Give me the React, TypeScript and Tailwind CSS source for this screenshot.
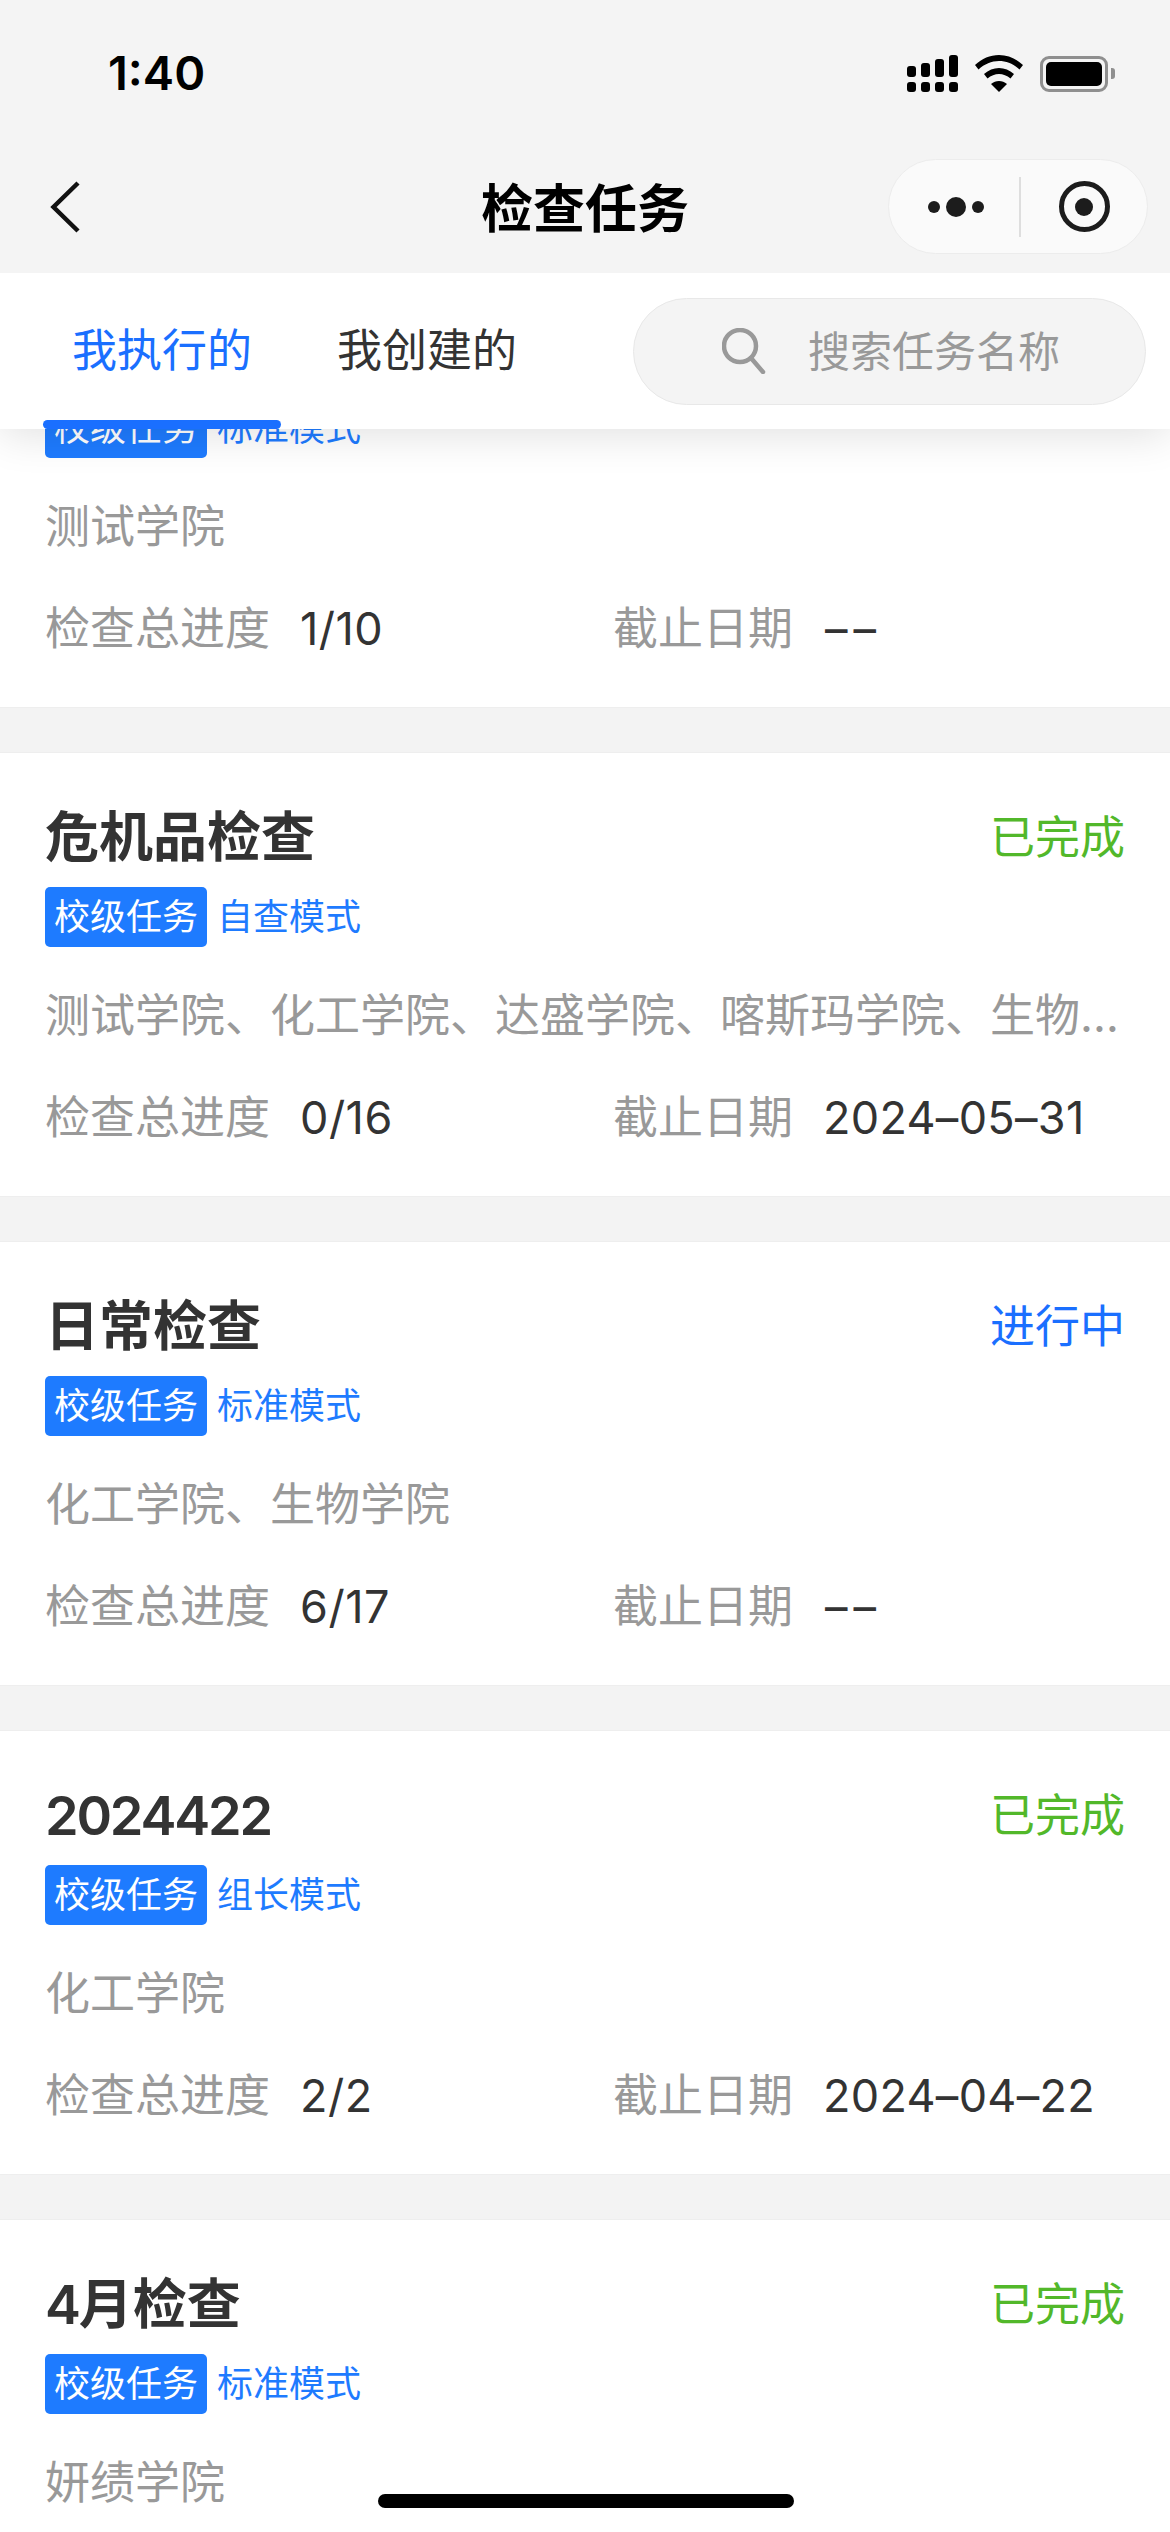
import React from "react";

interface Task {
  name: string;
  mode: string;
  status?: "done" | "doing";
  colleges: string;
  progress?: string;
  deadline?: string;
}

const NO_DEADLINE = "––";

const TASKS: Task[] = [
  { name: "", mode: "标准模式", colleges: "测试学院", progress: "1/10", deadline: NO_DEADLINE },
  {
    name: "危机品检查",
    mode: "自查模式",
    status: "done",
    colleges: "测试学院、化工学院、达盛学院、喀斯玛学院、生物学院、妍绩学院",
    progress: "0/16",
    deadline: "2024–05–31",
  },
  { name: "日常检查", mode: "标准模式", status: "doing", colleges: "化工学院、生物学院", progress: "6/17", deadline: NO_DEADLINE },
  { name: "2024422", mode: "组长模式", status: "done", colleges: "化工学院", progress: "2/2", deadline: "2024–04–22" },
  { name: "4月检查", mode: "标准模式", status: "done", colleges: "妍绩学院" },
];

const StatusIcons = () => (
  <div className="flex items-center gap-[17px]">
    <svg width="51" height="37" viewBox="0 0 51 37" fill="#000">
      <rect x="0" y="11" width="9" height="11" rx="3" />
      <rect x="14" y="8" width="9" height="14" rx="3" />
      <rect x="28" y="4" width="9" height="18" rx="3" />
      <rect x="42" y="0" width="9" height="22" rx="3" />
      <rect x="0" y="27" width="9" height="10" rx="3" />
      <rect x="14" y="27" width="9" height="10" rx="3" />
      <rect x="28" y="27" width="9" height="10" rx="3" />
      <rect x="42" y="27" width="9" height="10" rx="3" />
    </svg>
    <svg width="48" height="37" viewBox="0 0 48 37" fill="#000">
      <path d="M24 0c9 0 17 3.500 24 10l-3.500 4.500C38.500 9 31.500 6 24 6S9.500 9 3.500 14.500L0 10C7 3.500 15 0 24 0z" />
      <path d="M24 13c5.500 0 10.500 2 15 6l-3.500 4.500C32 20.500 28 19 24 19s-8 1.500-11.500 4.500L9 19c4.500-4 9.500-6 15-6z" />
      <path d="M24 26c3 0 5.500 1 8 3l-8 8-8-8c2.500-2 5-3 8-3z" />
    </svg>
    <div className="flex items-center">
      <div className="h-[36px] w-[68px] rounded-[9px] border-[3px] border-[#8f8f8f] p-[3px]">
        <div className="h-full w-full rounded-[5px] bg-black" />
      </div>
      <div className="ml-[3px] h-[11px] w-[4px] rounded-r-[3px] bg-[#8f8f8f]" />
    </div>
  </div>
);

const CapsuleMenu = () => (
  <div className="flex h-[95px] w-[260px] items-center rounded-full border border-[#ececec] bg-[#fafafa]">
    <div className="flex w-[130px] items-center justify-center gap-[6px] pl-[3px]">
      <span className="h-[12px] w-[12px] rounded-full bg-[#1c1c1c]" />
      <span className="h-[20px] w-[20px] rounded-full bg-[#1c1c1c]" />
      <span className="h-[12px] w-[12px] rounded-full bg-[#1c1c1c]" />
    </div>
    <div className="h-[60px] w-[2px] bg-[#dedede]" />
    <div className="flex flex-1 items-center justify-center">
      <div className="flex h-[51px] w-[51px] items-center justify-center rounded-full border-[5px] border-[#1c1c1c]">
        <span className="h-[18px] w-[18px] rounded-full bg-[#1c1c1c]" />
      </div>
    </div>
  </div>
);

// digits run narrower than the CJK glyphs in the bold title
const TaskName = ({ name }: { name: string }) => (
  <>
    {name.split(/(\d+)/).map((part, i) =>
      /\d/.test(part) ? (
        <span key={i} className="tracking-[-2.200px]">
          {part}
        </span>
      ) : (
        part
      ),
    )}
  </>
);

const TaskCard = ({ task }: { task: Task }) => (
  <div className="h-[445px] border-y border-[#eeeeee] bg-white pt-[50px] pr-[45px] pl-[45px]">
    <div className="flex h-[70px] items-center justify-between">
      <div className="text-[54px] leading-[70px] font-semibold text-[#333333]">
        <TaskName name={task.name} />
      </div>
      {task.status === "done" && <div className="text-[45px] leading-[70px] text-[#52b82a]">已完成</div>}
      {task.status === "doing" && <div className="text-[45px] leading-[70px] text-[#1a6fff]">进行中</div>}
    </div>
    <div className="mt-[14px] flex items-center">
      <span className="flex h-[60px] w-[162px] items-center justify-center rounded-[5px] bg-[#1e7bff] text-[36px] text-white">
        校级任务
      </span>
      <span className="ml-[10px] text-[36px] text-[#1e7bff]">{task.mode}</span>
    </div>
    <div className="mt-[38px] truncate text-[45px] leading-[62px] text-[#999999]">{task.colleges}</div>
    {task.progress && (
      <div className="mt-[40px] flex items-center text-[45px] leading-[62px]">
        <div className="flex w-[568px]">
          <span className="text-[#999999]">检查总进度</span>
          <span className="ml-[30px] tracking-[0.5px] text-[#333333]">{task.progress}</span>
        </div>
        <span className="text-[#999999]">截止日期</span>
        {task.deadline === NO_DEADLINE ? (
          <span className="ml-[32px] tracking-[6px] text-[#333333]">{task.deadline}</span>
        ) : (
          <span className="ml-[30px] tracking-[0.3px] text-[#333333]">{task.deadline}</span>
        )}
      </div>
    )}
  </div>
);

export default function App() {
  return (
    <div
      className="relative flex h-[2532px] w-[1170px] flex-col overflow-hidden bg-[#f3f3f3]"
      style={{ fontFamily: 'Inter, "Noto Sans CJK SC", sans-serif' }}
    >
      <div className="relative z-10 shrink-0 shadow-[0_6px_40px_rgba(0,0,0,0.12)]">
        {/* status bar */}
        <div className="flex h-[147px] items-center justify-between bg-[#f4f4f4] pr-[55px] pl-[108px]">
          <span className="text-[47px] font-semibold text-black">1:40</span>
          <StatusIcons />
        </div>

        {/* nav bar */}
        <div className="relative flex h-[126px] items-center justify-center bg-[#f4f4f4]">
          <svg className="absolute top-[33px] left-[48px]" width="34" height="54" viewBox="0 0 34 54" fill="none">
            <path d="M30 3 5.500 27 30 51" stroke="#111111" strokeWidth="4.500" />
          </svg>
          <span className="text-[52px] font-semibold text-black">检查任务</span>
          <div className="absolute top-[12px] right-[22px]">
            <CapsuleMenu />
          </div>
        </div>

        {/* tabs and search */}
        <div className="relative flex h-[156px] items-center bg-white">
          <span className="ml-[72px] text-[45px] text-[#1a6fff]">我执行的</span>
          <span className="ml-[85px] text-[45px] text-[#333333]">我创建的</span>
          <div className="ml-[116px] flex h-[107px] w-[513px] items-center rounded-full border border-[#e8e8e8] bg-[#f4f4f4] pl-[88px]">
            <svg width="46" height="46" viewBox="0 0 46 46" fill="none" stroke="#999999" strokeWidth="4.500">
              <circle cx="18" cy="18" r="16" />
              <path d="m29 30 12 14" strokeLinecap="round" />
            </svg>
            <span className="ml-[40px] text-[42px] text-[#999999]">搜索任务名称</span>
          </div>
          <div className="absolute bottom-0 left-[43px] h-[9px] w-[238px] rounded-[5px] bg-[#1a6fff]" />
        </div>
      </div>

      {/* task list, scrolled so the first card sits under the header */}
      <div className="mt-[-166px] flex flex-col gap-[44px]">
        {TASKS.map((task, index) => (
          <TaskCard key={index} task={task} />
        ))}
      </div>

      <div className="absolute bottom-[24px] left-[378px] z-20 h-[14px] w-[416px] rounded-full bg-black" />
    </div>
  );
}
